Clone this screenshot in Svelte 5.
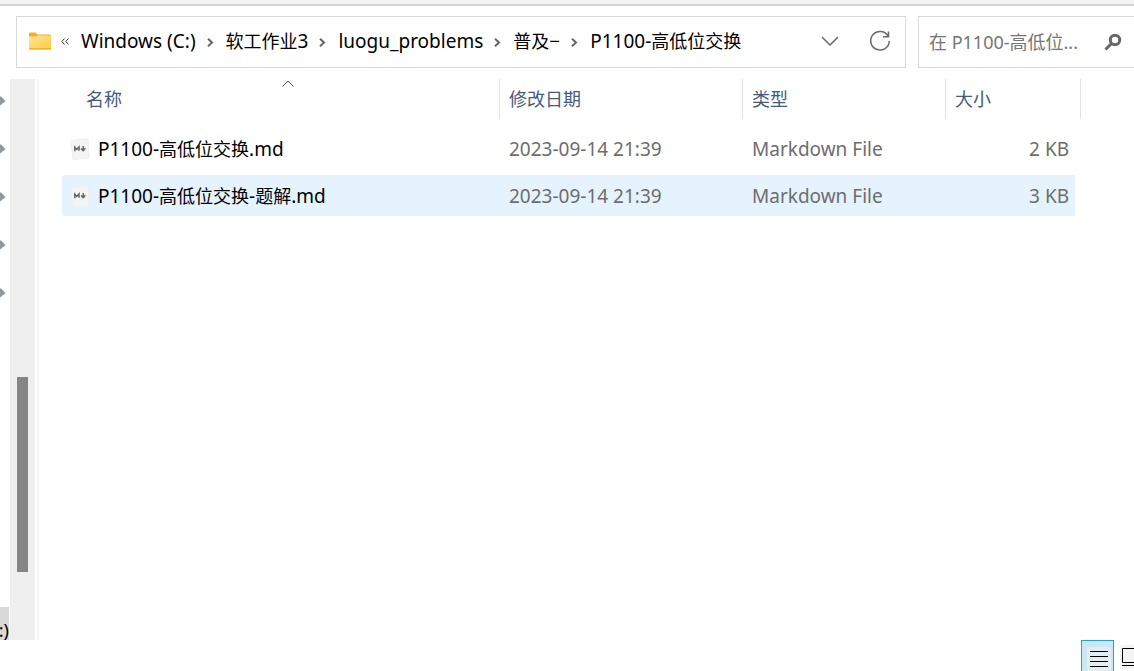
<script lang="ts">
	type Column = { key: string; label: string; width: number };
	type FileRow = { name: string; modified: string; type: string; size: string };

	const crumbs = ['Windows (C:)', '软工作业3', 'luogu_problems', '普及−', 'P1100-高低位交换'];

	const columns: Column[] = [
		{ key: 'name', label: '名称', width: 438 },
		{ key: 'modified', label: '修改日期', width: 243 },
		{ key: 'type', label: '类型', width: 203 },
		{ key: 'size', label: '大小', width: 135 }
	];

	const files: FileRow[] = [
		{ name: 'P1100-高低位交换.md', modified: '2023-09-14 21:39', type: 'Markdown File', size: '2 KB' },
		{ name: 'P1100-高低位交换-题解.md', modified: '2023-09-14 21:39', type: 'Markdown File', size: '3 KB' }
	];

	const pins = [0, 1, 2, 3, 4];

	let hovered = $state(1);
	let query = $state('');
	let view = $state('details');

	// latin runs are set a step larger than the hanzi beside them
	function runs(text: string): string[] {
		return text.match(/[\u4e00-\u9fff]+|[^\u4e00-\u9fff]+/g) ?? [];
	}

	function isLatin(run: string): boolean {
		return !/[\u4e00-\u9fff]/.test(run);
	}
</script>

{#snippet mixed(text: string)}
	{#each runs(text) as run, i (i)}<span class:latin={isLatin(run)}>{run}</span>{/each}
{/snippet}

<div class="explorer">
	<div class="ribbon-edge"></div>

	<header class="toolbar">
		<nav class="address" aria-label="地址">
			<svg class="folder" width="22" height="18" viewBox="0 0 22 18" aria-hidden="true">
				<defs>
					<linearGradient id="folder-face" x1="0" y1="0" x2="1" y2="1">
						<stop offset="0" stop-color="#ffe69b" />
						<stop offset="1" stop-color="#ffca3a" />
					</linearGradient>
				</defs>
				<path d="M0 1.5Q0 .5 1 .5H6.5L8.5 2.5H21Q22 2.5 22 3.5V8H0Z" fill="#f5b01c" />
				<path d="M0 4.5H7L9 3.5H22V16.5Q22 17.5 21 17.5H1Q0 17.5 0 16.5Z" fill="url(#folder-face)" />
				<path d="M0 16.2H22V16.7Q22 17.5 21 17.5H1Q0 17.5 0 16.7Z" fill="#eba91c" />
			</svg>
			<button type="button" class="overflow" aria-label="上级文件夹">
				<svg width="8" height="7" viewBox="0 0 8 7" aria-hidden="true">
					<path d="M3.5 .5L.8 3.5L3.5 6.5M7.5 .5L4.8 3.5L7.5 6.5" />
				</svg>
			</button>
			<ol class="crumbs">
				{#each crumbs as crumb, i (crumb)}
					<li>
						{#if i > 0}
							<svg class="sep" width="7" height="9" viewBox="0 0 7 9" aria-hidden="true">
								<path d="M1 .8L5 4.5L1 8.2" />
							</svg>
						{/if}
						<button type="button">{@render mixed(crumb)}</button>
					</li>
				{/each}
			</ol>
			<button type="button" class="tool" aria-label="以前的位置">
				<svg width="18" height="10" viewBox="0 0 18 10" aria-hidden="true">
					<path d="M1 1L9 9L17 1" />
				</svg>
			</button>
			<button type="button" class="tool" aria-label="刷新">
				<svg width="22" height="22" viewBox="0 0 22 22" aria-hidden="true">
					<path d="M19.3 6.5A9.3 9.3 0 1 0 20.3 11M19.5 1.5V6.8H14" />
				</svg>
			</button>
		</nav>

		<label class="search">
			<input type="text" placeholder="在 P1100-高低位..." aria-label="搜索" bind:value={query} />
			<svg width="18" height="18" viewBox="0 0 18 18" aria-hidden="true">
				<circle cx="11" cy="7" r="4.7" />
				<path d="M7.5 10.5L1.5 16.5" />
			</svg>
		</label>
	</header>

	<main class="body">
		<aside class="tree">
			<ul>
				{#each pins as pin (pin)}
					<li>
						<svg width="5" height="10" viewBox="0 0 5 10" aria-hidden="true">
							<path d="M0 .5H1L5 4.5V6L3 7L1 9H0Z" />
						</svg>
					</li>
				{/each}
			</ul>
			<div class="drive"><span>(C:)</span></div>
		</aside>
		<div class="scrollbar"><div class="thumb"></div></div>

		<section class="files">
			<table>
				<colgroup>
					{#each columns as col (col.key)}
						<col style="width: {col.width}px" />
					{/each}
				</colgroup>
				<thead>
					<tr>
						{#each columns as col (col.key)}
							<th class={col.key}>
								<button type="button">
									{#if col.key === 'name'}
										<svg class="sorted" width="12" height="7" viewBox="0 0 12 7" aria-hidden="true">
											<path d="M.5 6.5L6 1L11.5 6.5" />
										</svg>
									{/if}
									{col.label}
								</button>
							</th>
						{/each}
					</tr>
				</thead>
				<tbody>
					{#each files as file, i (file.name)}
						<tr class:hovered={hovered === i} onmouseenter={() => (hovered = i)}>
							<td class="name">
								<div class="file">
									<svg width="20" height="22" viewBox="0 0 20 22" aria-hidden="true">
										<path class="sheet" d="M1.5 2.5L17 .8Q18 .8 18 1.8L19 19Q19 20 18 20.2L4 21.5Q3 21.5 2.8 20.5L.8 3.5Q.8 2.7 1.5 2.5Z" />
										<path class="mark" d="M4.8 13.2V9.3L6.8 11.5L9 9V12.8M13.2 8V12.5M11 10.5L13.2 12.7L15.3 10.2" />
									</svg>
									<span>{@render mixed(file.name)}</span>
								</div>
							</td>
							<td class="latin">{file.modified}</td>
							<td class="latin">{file.type}</td>
							<td class="latin size">{file.size}</td>
						</tr>
					{/each}
				</tbody>
			</table>
		</section>
	</main>

	<footer class="status">
		<div class="views">
			<button type="button" class:active={view === 'details'} aria-label="详细信息" onclick={() => (view = 'details')}>
				<svg width="24" height="24" viewBox="0 0 24 24" aria-hidden="true">
					<rect class="plate" width="24" height="24" rx="3" />
					<path d="M3 4.5H21M3 9.5H21M3 14.5H21M3 19.5H21" />
				</svg>
			</button>
			<button type="button" class:active={view === 'large'} aria-label="大图标" onclick={() => (view = 'large')}>
				<svg width="24" height="24" viewBox="0 0 24 24" aria-hidden="true">
					<rect class="plate" y="-2" width="24" height="24" rx="3" />
					<path d="M2.5 1.5H20.5V15.5H2.5ZM2 18.5H21" />
				</svg>
			</button>
		</div>
	</footer>
</div>

<style>
	:global(body) {
		margin: 0;
		background: #fff;
	}
	.explorer {
		display: flex;
		flex-direction: column;
		height: 100vh;
		overflow: hidden;
		font-family: 'Noto Sans', 'Noto Sans CJK SC', sans-serif;
		font-size: 18px;
		line-height: 24px;
		color: #000;
	}
	button {
		padding: 0;
		border: none;
		background: none;
		font: inherit;
		color: inherit;
		text-align: left;
	}
	svg {
		display: block;
		flex: none;
		fill: none;
	}
	.latin {
		font-size: 19px;
	}
	.ribbon-edge {
		flex: none;
		height: 4px;
		background: #f5f5f5;
		border-bottom: 2px solid #d5d5d5;
	}
	.toolbar {
		flex: none;
		display: flex;
		gap: 12px;
		padding: 10px 0 11px 16px;
	}
	.address,
	.search {
		box-sizing: border-box;
		display: flex;
		align-items: center;
		height: 52px;
		border: 1px solid #d9d9d9;
	}
	.address {
		flex: 1;
		min-width: 0;
		padding: 0 14px 0 12px;
	}
	.folder {
		margin-bottom: 2px;
	}
	.overflow {
		margin: 0 12px 2px 10px;
	}
	.overflow path {
		stroke: #333;
	}
	.crumbs {
		flex: 1;
		display: flex;
		min-width: 0;
		margin: 0;
		padding: 0 0 2px;
		list-style: none;
		white-space: nowrap;
	}
	.crumbs li {
		display: flex;
		align-items: center;
	}
	.sep {
		margin: 3px 12px 0 11px;
	}
	.sep path {
		stroke: #666;
		stroke-width: 2;
	}
	.tool {
		display: flex;
		width: 22px;
		justify-content: center;
		margin-left: 28px;
		margin-bottom: 2px;
	}
	.tool path {
		stroke: #6a6a6a;
		stroke-width: 1.5;
	}
	.search {
		width: 216px;
		padding: 0 12px 0 10px;
		border-right: none;
	}
	.search input {
		flex: 1;
		min-width: 0;
		padding: 0;
		border: none;
		outline: none;
		background: none;
		font: inherit;
	}
	.search input::placeholder {
		color: #757575;
		opacity: 1;
	}
	.search circle,
	.search path {
		stroke: #666;
		stroke-width: 3;
	}
	.body {
		flex: 1;
		display: flex;
		min-height: 0;
	}
	.tree {
		display: flex;
		flex-direction: column;
		justify-content: space-between;
		width: 10px;
		overflow: hidden;
	}
	.tree ul {
		margin: 0;
		padding: 0;
		list-style: none;
	}
	.tree li {
		display: flex;
		align-items: center;
		height: 44px;
		padding-bottom: 4px;
	}
	.tree path {
		fill: #8f999f;
	}
	.drive {
		display: flex;
		justify-content: flex-end;
		align-items: flex-end;
		height: 33px;
		margin-right: 1px;
		overflow: hidden;
		background: #d9d9d9;
		line-height: 20px;
	}
	.scrollbar {
		display: flex;
		flex-direction: column;
		width: 11px;
		padding: 0 7px;
		background: #efefef;
	}
	.scrollbar::before {
		content: '';
		flex: 298;
	}
	.scrollbar::after {
		content: '';
		flex: 68;
	}
	.thumb {
		flex: 195;
		background: #858585;
	}
	.files {
		flex: 1;
		min-width: 0;
		margin-left: 2px;
		padding-left: 23px;
		border-left: 2px solid #f5f5f5;
		overflow: hidden;
	}
	table {
		width: 1019px;
		margin-top: -6px;
		table-layout: fixed;
		border-collapse: separate;
		border-spacing: 0 6px;
	}
	th {
		height: 43px;
		padding: 0;
		vertical-align: top;
		font-weight: 400;
		color: #44597c;
	}
	th.name {
		padding-left: 15px;
	}
	th button {
		position: relative;
		display: block;
		width: 100%;
		height: 40px;
		padding-left: 9px;
		border-right: 1px solid #e2e2e2;
	}
	.sorted {
		position: absolute;
		top: 1px;
		left: 50%;
		transform: translateX(-50%);
	}
	.sorted path {
		stroke: #555;
	}
	td {
		height: 41px;
		padding: 0 9px;
		color: #6d6d6d;
		white-space: nowrap;
	}
	td.name {
		padding-left: 8px;
		color: #000;
		border-radius: 3px 0 0 3px;
	}
	td.size {
		padding-right: 6px;
		text-align: right;
		border-right: 6px solid transparent;
		border-radius: 0 3px 3px 0;
		background-clip: padding-box;
	}
	.hovered td {
		background-color: #e5f3ff;
	}
	.file {
		display: flex;
		align-items: center;
		gap: 8px;
	}
	.sheet {
		fill: #f4f4f4;
		stroke: #efefef;
	}
	.mark {
		stroke: #666;
		stroke-width: 1.5;
	}
	.status {
		flex: none;
		display: flex;
		justify-content: flex-end;
		height: 31px;
		overflow: hidden;
	}
	.views {
		display: flex;
		width: 53px;
	}
	.views button {
		box-sizing: border-box;
		flex: none;
		width: 33px;
		height: 38px;
		padding: 6px 3px 6px 5px;
		border: 1px solid transparent;
	}
	.views svg {
		overflow: visible;
	}
	.views button.active {
		background: #cbe8f6;
		border-color: #26a0da;
	}
	.views path {
		stroke: #000;
	}
	.plate {
		fill: #f3f3f3;
	}
	.active .plate {
		fill: #e3edf2;
	}
</style>
